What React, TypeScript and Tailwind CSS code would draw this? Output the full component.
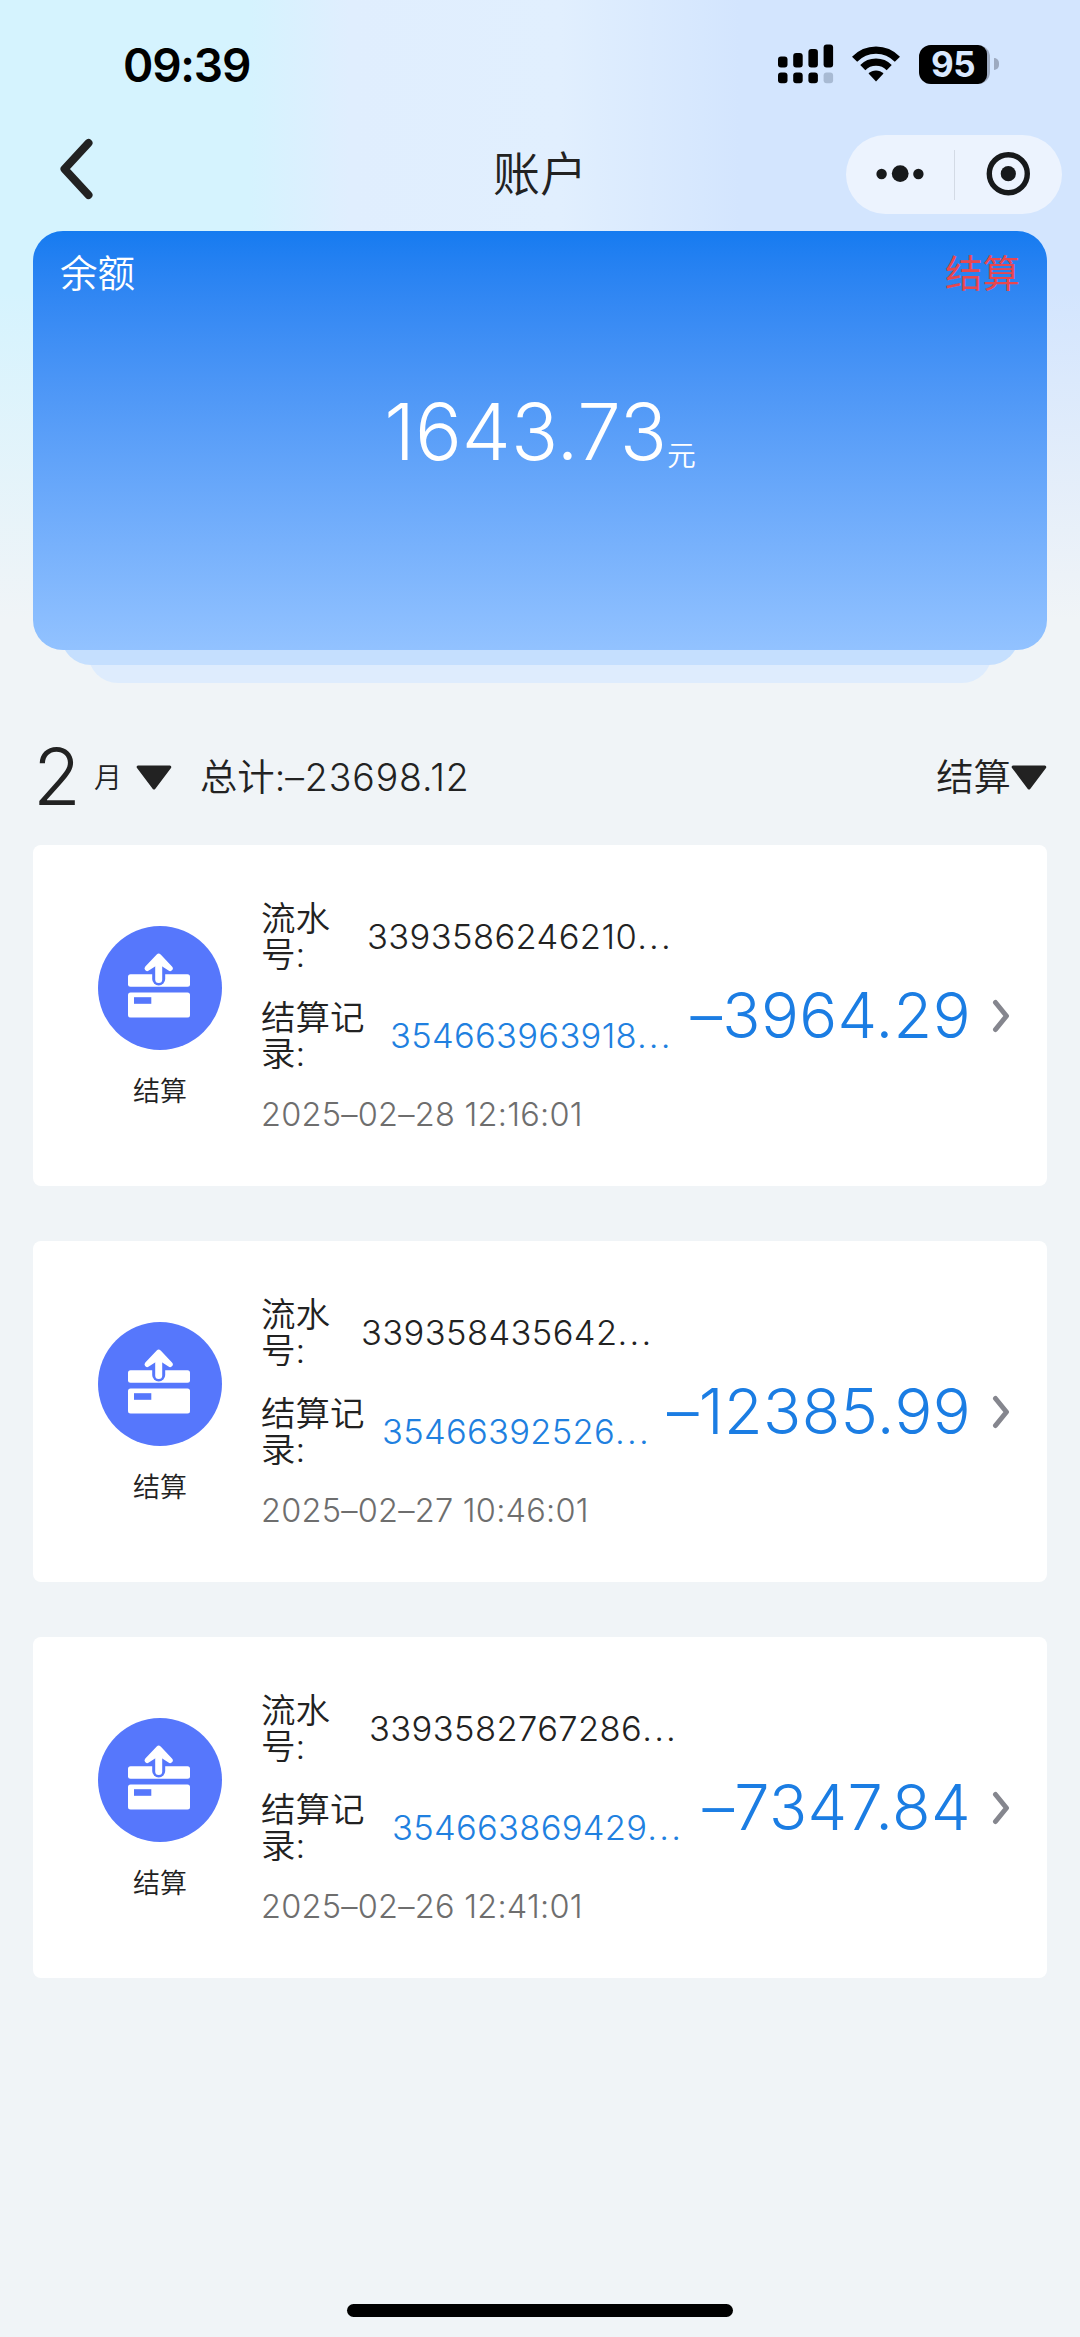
import React from 'react';

interface SettlementRecord {
  serialNo: string;
  recordNo: string;
  time: string;
  amount: string;
  serialGap: string;
  recordGap: string;
}

const records: SettlementRecord[] = [
  {
    serialNo: '3393586246210',
    recordNo: '354663963918',
    time: '2025–02–28 12:16:01',
    amount: '–3964.29',
    serialGap: 'ml-[26px]',
    recordGap: 'ml-[23px]'
  },
  {
    serialNo: '339358435642',
    recordNo: '35466392526',
    time: '2025–02–27 10:46:01',
    amount: '–12385.99',
    serialGap: 'ml-[20px]',
    recordGap: 'ml-[15px]'
  },
  {
    serialNo: '3393582767286',
    recordNo: '354663869429',
    time: '2025–02–26 12:41:01',
    amount: '–7347.84',
    serialGap: 'ml-[28px]',
    recordGap: 'ml-[25px]'
  }
];

const StatusBar: React.FC = () => (
  <div className="flex h-[128px] items-center pl-[123px] pr-[81px]">
    <span className="mt-[1px] text-[46px] font-semibold leading-none tracking-[-1.2px] text-black">09:39</span>
    <div className="ml-auto flex items-center">
      <svg width="56" height="40" viewBox="0 0 56 40" fill="#000">
        <rect x="0" y="12.5" width="9.5" height="11" rx="3" />
        <rect x="15.2" y="9" width="9.5" height="14.5" rx="3" />
        <rect x="30.4" y="5" width="9.5" height="18.5" rx="3" />
        <rect x="45.6" y="0.5" width="9.5" height="23" rx="3" />
        <rect x="0" y="28.5" width="9.5" height="10.8" rx="3" />
        <rect x="15.2" y="28.5" width="9.5" height="10.8" rx="3" />
        <rect x="30.4" y="28.5" width="9.5" height="10.8" rx="3" />
        <rect x="45.6" y="28.5" width="9.5" height="10.8" rx="3" fill="#a8bad3" />
      </svg>
      <svg className="ml-[18px]" width="48" height="36" viewBox="0 0 48 36" fill="none" stroke="#000" strokeWidth="7.2">
        <path d="M2.6 13.2C14.5 1 33.5 1 45.4 13.2" />
        <path d="M10.8 21.6C18 14.4 30 14.4 37.2 21.6" />
        <path d="M16.5 27.6C20.5 23.3 27.5 23.3 31.5 27.6L24 35.5Z" fill="#000" stroke="none" />
      </svg>
      <div className="ml-[19px] flex h-[39px] w-[71px] rounded-[12px] bg-[#9daac0]">
        <div className="flex h-[39px] w-[68px] items-center justify-center rounded-l-[12px] rounded-r-[9px] bg-black text-[35px] font-bold leading-[39px] tracking-[-0.5px] text-[#d9e8fe]">
          95
        </div>
      </div>
      <div className="ml-[4px] h-[12px] w-[5px] rounded-r-full bg-[#9daac0]" />
    </div>
  </div>
);

const NavBar: React.FC = () => (
  <div className="grid h-[103px] grid-cols-3 items-start pl-[58px] pr-[18px]">
    <svg className="mt-[10px]" width="36" height="62" viewBox="0 0 36 62" fill="none" stroke="#222" strokeWidth="8" strokeLinecap="round" strokeLinejoin="round">
      <path d="M30.5 5L6.5 31L30.5 57" />
    </svg>
    <h1 className="mt-[23px] -ml-[40px] text-center text-[47px] font-[350] leading-[46px] text-[#222]">账户</h1>
    <div className="mt-[7px] flex h-[79px] w-[216px] items-center justify-self-end rounded-full bg-[#ecf3fe]">
      <svg width="108" height="79" viewBox="0 0 108 79" fill="#17191b">
        <circle cx="35.6" cy="39" r="5.2" />
        <circle cx="54.2" cy="38.6" r="8.4" />
        <circle cx="72.4" cy="39" r="5.2" />
      </svg>
      <div className="h-[50px] w-px bg-[#d3dae5]" />
      <svg width="107" height="79" viewBox="0 0 107 79">
        <circle cx="53.3" cy="38.7" r="19" fill="none" stroke="#17191b" strokeWidth="5.4" />
        <circle cx="53.3" cy="38.7" r="7.6" fill="#17191b" />
      </svg>
    </div>
  </div>
);

const BalanceCard: React.FC = () => (
  <div className="mx-[33px] h-[452px]">
    <div className="h-[419px] rounded-[30px] bg-linear-to-b from-[#157bf0] to-[#92c2ff] px-[27px] pt-[23px] text-white">
      <div className="flex justify-between text-[37.5px] font-[350] leading-[40px]">
        <span>余额</span>
        <span className="font-normal text-[#e8474f]">结算</span>
      </div>
      <div className="mt-[98px] flex items-end justify-center">
        <span className="text-[78px] font-light leading-[80px]">1643.73</span>
        <span className="mb-[1px] text-[28.8px] font-[350] leading-none">元</span>
      </div>
    </div>
    <div className="mx-[28px] -mt-[30px] h-[45px] rounded-b-[30px] bg-[#c5dffe] [clip-path:inset(30px_0_0_0)]" />
    <div className="mx-[55px] -mt-[30px] h-[48px] rounded-b-[30px] bg-[#deecfd] [clip-path:inset(30px_0_0_0)]" />
  </div>
);

const DownArrow: React.FC = () => (
  <svg width="36" height="25" viewBox="0 0 36 25" fill="#222" stroke="#222" strokeWidth="3" strokeLinejoin="round">
    <path d="M2.2 2H33.8L18 23Z" />
  </svg>
);

const FilterBar: React.FC = () => (
  <div className="flex h-[162px] items-center px-[33px] pt-[27px] font-[350] text-[#222]">
    <span className="-mt-[2px] text-[78px] leading-[80px]">2</span>
    <span className="ml-[13px] text-[28px] leading-[30px]">月</span>
    <span className="ml-[14px]">
      <DownArrow />
    </span>
    <span className="ml-[28px] text-[37.4px] leading-[40px]">
      总计:<span className="tracking-[0.9px]">–23698.12</span>
    </span>
    <span className="ml-auto text-[37.4px] leading-[40px]">结算</span>
    <DownArrow />
  </div>
);

const SettleIcon: React.FC = () => (
  <svg width="124" height="124" viewBox="0 0 124 124">
    <circle cx="62" cy="62" r="62" fill="#5677fc" />
    <rect x="30" y="48.3" width="62" height="12.5" rx="2.5" fill="#fff" />
    <rect x="30" y="66.5" width="62" height="25" rx="2.5" fill="#fff" />
    <rect x="36" y="71.2" width="17.3" height="6.6" fill="#5677fc" />
    <path d="M60.7 46V53" stroke="#5677fc" strokeWidth="13" strokeLinecap="round" />
    <path d="M60.7 33V53.5" stroke="#fff" strokeWidth="7" strokeLinecap="round" />
    <path d="M49.3 42.3L60.7 30.5L72 42.3L60.7 35Z" fill="#fff" stroke="#fff" strokeWidth="5.5" strokeLinecap="round" strokeLinejoin="round" />
  </svg>
);

const RecordCard: React.FC<{ record: SettlementRecord }> = ({ record }) => (
  <div className="flex h-[341px] rounded-[8px] bg-white pl-[65px] pr-[37px] font-[350] text-[#222]">
    <div className="flex w-[124px] shrink-0 flex-col items-center pt-[81px]">
      <SettleIcon />
      <span className="mt-[27px] text-[27px] leading-[30px]">结算</span>
    </div>
    <div className="ml-[39px] shrink-0 pt-[56px] text-[34.5px] leading-[36px]">
      <div className="flex items-center">
        <span className="w-[80px]">流水号:</span>
        <span className={`tracking-[0.4px] ${record.serialGap}`}>
          {record.serialNo}
          <span className="tracking-[2.2px]">...</span>
        </span>
      </div>
      <div className="mt-[27px] flex items-center">
        <span className="w-[106px]">结算记录:</span>
        <span className={`tracking-[0.3px] text-[#2080e0] ${record.recordGap}`}>
          {record.recordNo}
          <span className="tracking-[2.2px]">...</span>
        </span>
      </div>
      <div className="mt-[25px] text-[32.5px] tracking-[0.25px] text-[#6e6e6e]">{record.time}</div>
    </div>
    <div className="-ml-[200px] flex flex-1 items-center justify-end">
      <span className="text-[63px] leading-none tracking-[0.4px] text-[#1b7de3]">{record.amount}</span>
      <svg className="ml-[21px]" width="18" height="34" viewBox="0 0 18 34" fill="none" stroke="#85868e" strokeWidth="5" strokeLinecap="round" strokeLinejoin="round">
        <path d="M3.5 3.5L14.5 17L3.5 30.5" />
      </svg>
    </div>
  </div>
);

const App: React.FC = () => {
  return (
    <div className="flex h-[2337px] w-[1080px] flex-col bg-[#f0f4f7] bg-[linear-gradient(to_bottom,transparent_290px,#f0f4f7_620px),linear-gradient(to_right,#d5f3fe_0px,#d5f3fe_250px,#e0eefe_350px,#e1effe_560px,#d3e5fe_740px,#d3e5fe_1080px)] font-['Inter','Noto_Sans_CJK_SC',sans-serif]">
      <StatusBar />
      <NavBar />
      <BalanceCard />
      <FilterBar />
      <div className="mx-[33px] flex flex-col gap-[55px]">
        {records.map(record => (
          <RecordCard key={record.serialNo} record={record} />
        ))}
      </div>
      <div className="mt-auto mb-[20px] h-[13px] w-[386px] self-center rounded-full bg-black" />
    </div>
  );
};

export default App;
